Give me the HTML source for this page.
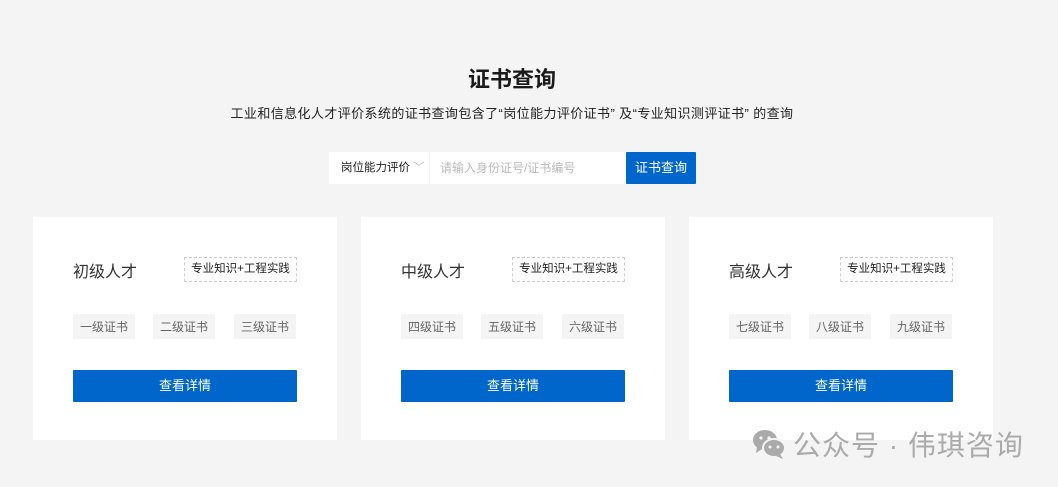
<!DOCTYPE html>
<html><head><meta charset="utf-8"><style>
*{margin:0;padding:0;box-sizing:border-box}
body{width:1058px;height:487px;background:#f4f4f4;font-family:"Liberation Sans","Noto Sans CJK SC",sans-serif;position:relative;overflow:hidden;color:#222}
.abs{position:absolute}
h1{position:absolute;top:62px;left:0;width:1024px;text-align:center;font-size:22px;font-weight:bold;color:#1a1a1a}
.sub{top:103px;left:0;width:1024px;text-align:center;font-size:13px;color:#222;letter-spacing:0.4px}
.sel{left:329px;top:152px;width:100px;height:32px;background:#fff;font-size:11.5px;line-height:32px;padding-left:12px;color:#222}
.inp{left:430px;top:152px;width:196px;height:32px;background:#fff;font-size:12px;line-height:32px;padding-left:10px;color:#bbb}
.btn{left:626px;top:152px;width:70px;height:32px;background:#0066cc;color:#fff;font-size:13px;line-height:32px;text-align:center;border-radius:1px}
.card{top:217px;width:304px;height:223px;background:#fff}
.t{left:40px;top:41px;font-size:16px;color:#333}
.tag{left:151px;top:40px;width:113px;height:25px;border:1px dashed #ccc;font-size:11.5px;line-height:23px;text-align:center;color:#222}
.c{top:97px;width:62px;height:25px;background:#f4f4f4;font-size:12px;line-height:27px;text-align:center;color:#666}
.d{left:40px;top:153px;width:224px;height:32px;background:#0066cc;color:#fff;font-size:13px;line-height:32px;text-align:center;border-radius:1px}
.wm{left:793px;top:424px;font-size:28px;color:#aaa;letter-spacing:1px}
</style></head><body>
<h1>证书查询</h1>
<div class="abs sub">工业和信息化人才评价系统的证书查询包含了“岗位能力评价证书” 及“专业知识测评证书” 的查询</div>
<div class="abs sel">岗位能力评价 <span style="color:#bbb">﹀</span></div>
<div class="abs inp">请输入身份证号/证书编号</div>
<div class="abs btn">证书查询</div>

<div class="abs card" style="left:33px">
<div class="abs t">初级人才</div><div class="abs tag">专业知识+工程实践</div>
<div class="abs c" style="left:40px">一级证书</div><div class="abs c" style="left:120px">二级证书</div><div class="abs c" style="left:201px">三级证书</div>
<div class="abs d">查看详情</div></div>
<div class="abs card" style="left:361px">
<div class="abs t">中级人才</div><div class="abs tag">专业知识+工程实践</div>
<div class="abs c" style="left:40px">四级证书</div><div class="abs c" style="left:120px">五级证书</div><div class="abs c" style="left:201px">六级证书</div>
<div class="abs d">查看详情</div></div>
<div class="abs card" style="left:689px">
<div class="abs t">高级人才</div><div class="abs tag">专业知识+工程实践</div>
<div class="abs c" style="left:40px">七级证书</div><div class="abs c" style="left:120px">八级证书</div><div class="abs c" style="left:201px">九级证书</div>
<div class="abs d">查看详情</div></div>

<svg class="abs" style="left:752px;top:428px" width="34" height="32" viewBox="0 0 34 32">
<ellipse cx="13" cy="12" rx="12" ry="10" fill="#aaa"/><path d="M5 19 L4 25 L10 21Z" fill="#aaa"/>
<ellipse cx="22" cy="20" rx="11" ry="9" fill="#aaa" stroke="#f4f4f4" stroke-width="2"/><path d="M28 26 L31 31 L24 28Z" fill="#aaa"/>
<circle cx="9" cy="10" r="1.6" fill="#f4f4f4"/><circle cx="17" cy="10" r="1.6" fill="#f4f4f4"/>
<circle cx="18" cy="19" r="1.5" fill="#f4f4f4"/><circle cx="26" cy="19" r="1.5" fill="#f4f4f4"/></svg>
<div class="abs wm">公众号 · 伟琪咨询</div>
</body></html>
